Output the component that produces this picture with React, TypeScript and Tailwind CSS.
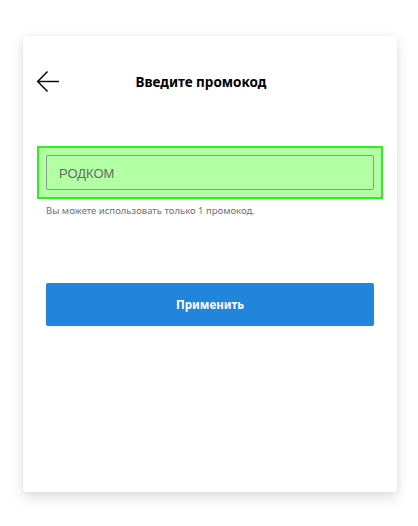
export default function App() {
  return (
    <main className="min-h-[526px] w-full bg-white pb-[34px] pt-[36px] font-['Noto_Sans',sans-serif]">
      <section className="ml-[23px] flex h-[456px] w-[374px] flex-col rounded-[3px] bg-white shadow-[0_6px_14px_rgba(0,0,0,0.12),0_0_6px_rgba(0,0,0,0.06)]">
        <header className="mt-[33px] flex h-[24px] items-center pl-[13px] pr-[13px]">
          <svg viewBox="0 0 24 24" className="h-[23px] w-[24px] shrink-0" fill="none" stroke="black" strokeWidth={1.5}>
            <path d="M23.5 12H1.2" />
            <path d="M11.5 1.5L1.2 12l10.3 10.5" />
          </svg>
          <h1 className="mt-[3px] flex-1 pr-[42px] text-center text-[13.5px] font-bold leading-none text-black">
            Введите промокод
          </h1>
        </header>

        <div className="mx-[14px] mt-[53px] border-2 border-[#33ee22] bg-[#b3ffa3] p-[7px]">
          <div className="flex h-[35px] items-center rounded-[2px] border border-[#8a9a86] px-[12px] pt-[3px] font-['Liberation_Sans',sans-serif] text-[13px] text-[#6a6a6a]">
            РОДКОМ
          </div>
        </div>

        <p className="mx-[23px] mt-[5px] text-[9.5px] leading-[14px] text-[#707070]">
          Вы можете использовать только 1 промокод.
        </p>

        <button className="mx-[23px] mt-[65px] h-[43px] rounded-[2px] bg-[#2185dc] text-[11.5px] font-bold text-white">
          Применить
        </button>
      </section>
    </main>
  );
}
